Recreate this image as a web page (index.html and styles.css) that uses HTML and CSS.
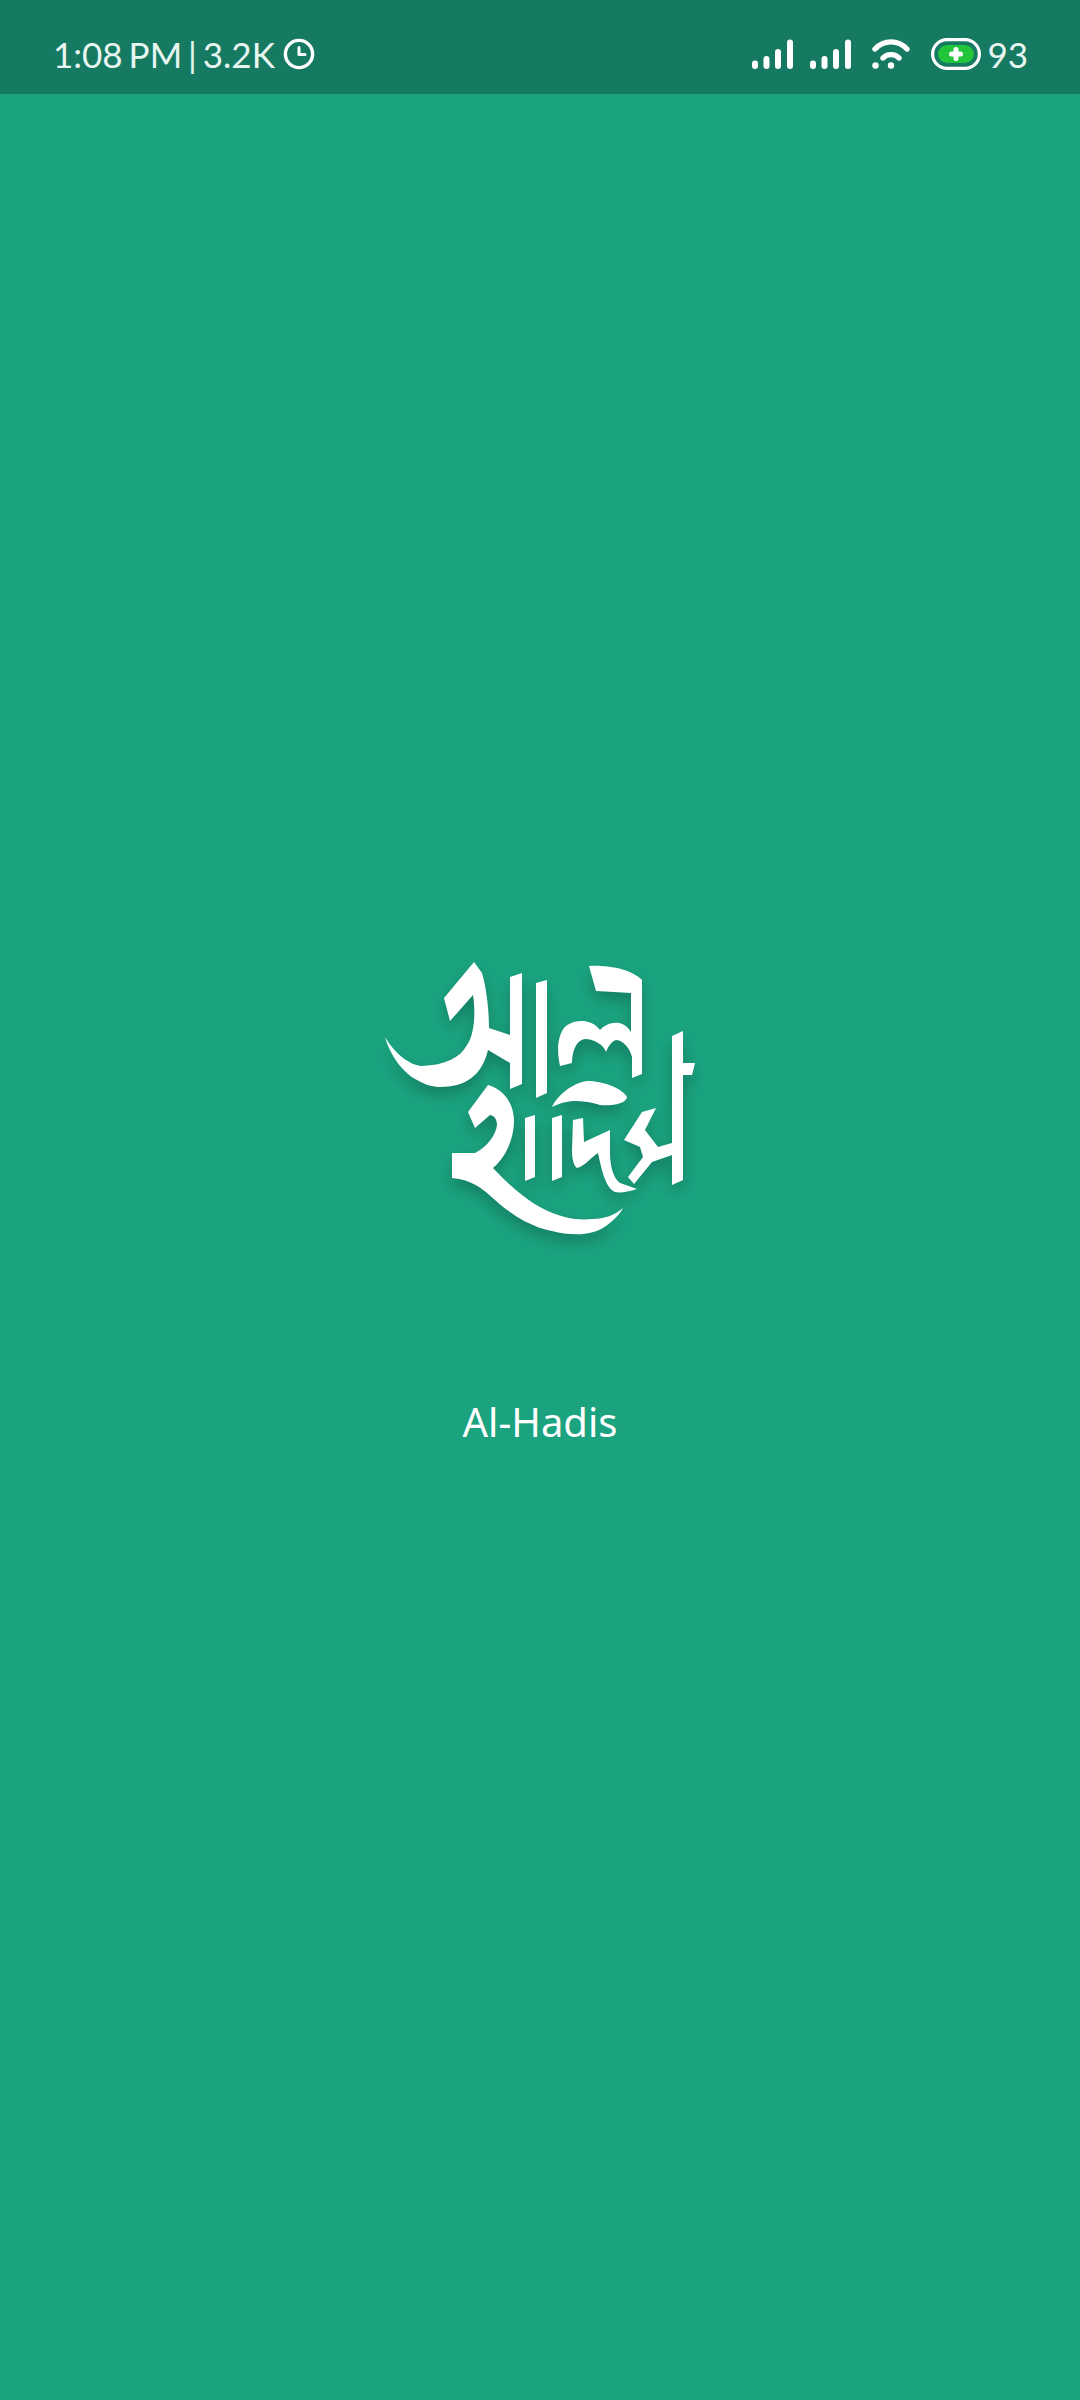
FILE: index.html
```html
<!DOCTYPE html>
<html lang="en">
<head>
<meta charset="utf-8">
<title>Al-Hadis</title>
<link rel="stylesheet" href="styles.css">
</head>
<body>
<div class="screen">
  <header class="status-bar">
    <div class="status-left">
      <span class="status-text">1:08 PM | 3.2K</span>
      <svg class="icon-clock" viewBox="0 0 32 32"><circle cx="16" cy="16" r="13.6" fill="none" stroke="#fff" stroke-width="3.4"/><path d="M16 9.5V16.5H22" fill="none" stroke="#fff" stroke-width="3" stroke-linecap="round" stroke-linejoin="round"/></svg>
    </div>
    <div class="status-right">
      <svg class="icon-signal" viewBox="0 0 41 30"><g fill="none" stroke="#fff" stroke-width="6" stroke-linecap="round"><path d="M3 24.5V27"/><path d="M14.5 20V27"/><path d="M26 13V27"/><path d="M38 3.5V27"/></g></svg>
      <svg class="icon-signal" viewBox="0 0 41 30"><g fill="none" stroke="#fff" stroke-width="6" stroke-linecap="round"><path d="M3 24.5V27"/><path d="M14.5 20V27"/><path d="M26 13V27"/><path d="M38 3.5V27"/></g></svg>
      <svg class="icon-wifi" viewBox="0 0 38 30"><g fill="none" stroke="#fff" stroke-width="5.4" stroke-linecap="round"><path d="M3 10C12 .5 26 .5 35 10"/><path d="M11 19C15 14.5 23 14.5 27 19"/></g><circle cx="3.5" cy="26.5" r="3.2" fill="#fff"/><circle cx="19" cy="26.5" r="3.2" fill="#fff"/></svg>
      <svg class="icon-battery" viewBox="0 0 50 32"><rect x="1.6" y="1.6" width="46.8" height="28.8" rx="14.4" fill="none" stroke="#fff" stroke-width="3.2"/><rect x="7" y="7" width="36" height="18" rx="9" fill="#22c43c"/><path d="M25 11.5V20.5M20.5 16H29.5" stroke="#fff" stroke-width="5" stroke-linecap="round"/></svg>
      <span class="status-text status-level">93</span>
    </div>
  </header>
  <main class="splash">
    <svg class="logo" viewBox="360 940 360 320" role="img" aria-label="আল হাদিস">
      <g fill="#fff">
        <path d="M474 962L444 998L450 1021L473 995C476 1015 474 1035 467 1045C460 1058 445 1065 422 1066C408 1065 394 1052 385 1037C390 1055 403 1073 417 1080C426 1085 433 1087 440 1087C465 1087 482 1076 488 1050L510 1063V1089L522 1084V973L510 977V1035L489 1028C489 1012 487 990 482 973Z"/>
        <path d="M536 983L547 980V1093L536 1098Z"/>
        <path d="M589 966C605 965 630 968 642 980V1074L632 1078V1057C630 1049 624 1041 617 1040C612 1040 608 1047 606 1052C604 1045 594 1039 585 1039C577 1040 572 1050 572 1063L560 1066C557 1052 557 1038 564 1028C571 1020 590 1017 600 1030C607 1022 623 1018 631 1032V993L596 991Z"/>
        <path d="M552 1107C557 1096 572 1083 587 1081C603 1081 622 1088 627 1097C626 1104 612 1106 600 1105C588 1102 572 1097 552 1107Z"/>
        <path d="M672 1036L683 1031V1063L695 1063L692 1075H683V1180L672 1185V1155L652 1162L634 1184L628 1177L643 1157L640 1147L624 1140L642 1112L656 1108L645 1130L658 1147L672 1143Z"/>
        <path d="M573 1120L583 1118L584 1142L610 1130V1153C610 1165 613 1178 620 1183L637 1189C628 1192 620 1193 615 1192C606 1188 602 1172 598 1153C590 1158 585 1166 577 1168C574 1166 572 1160 572 1150Z"/>
        <path d="M525 1118L535 1115V1177L525 1181Z"/>
        <path d="M552 1118L562 1115V1177L552 1181Z"/>
        <path d="M488 1085L468 1112L475 1128L490 1115C495 1116 497 1120 497 1125C496 1135 487 1147 475 1153H452V1178C472 1180 482 1188 495 1200C515 1218 535 1228 552 1231C572 1236 592 1236 606 1226C614 1220 620 1214 623 1208C615 1215 604 1219 593 1219C575 1221 558 1217 540 1207C525 1199 508 1184 493 1168C505 1158 514 1140 514 1120C514 1105 505 1090 488 1085Z"/>
      </g>
    </svg>
    <p class="app-name">Al-Hadis</p>
  </main>
</div>
</body>
</html>
```

FILE: styles.css
```css
html, body {
  margin: 0;
  padding: 0;
}

.screen {
  width: 1080px;
  height: 2400px;
  background: #1ba380;
  display: flex;
  flex-direction: column;
  overflow: hidden;
}

.status-bar {
  height: 94px;
  flex: none;
  background: #167a63;
  display: flex;
  justify-content: space-between;
  align-items: center;
  padding: 14px 52px 0 53px;
  box-sizing: border-box;
}

.status-left,
.status-right {
  display: flex;
  align-items: center;
}

.status-text {
  font-family: "Lato", sans-serif;
  font-size: 35px;
  line-height: 40px;
  word-spacing: -3px;
  color: #e8f6f1;
}

.icon-clock {
  width: 32px;
  height: 32px;
  margin-left: 8px;
}

.icon-signal {
  width: 41px;
  height: 30px;
  margin-right: 17px;
}

.icon-wifi {
  width: 38px;
  height: 30px;
  margin-left: 4px;
  margin-right: 21px;
}

.icon-battery {
  width: 50px;
  height: 32px;
  margin-right: 6px;
}

.splash {
  flex: 1;
  display: flex;
  flex-direction: column;
  align-items: center;
  padding-top: 846px;
}

.logo {
  width: 360px;
  height: 320px;
  filter: blur(0.5px) drop-shadow(0 8px 8px rgba(0, 0, 0, 0.22));
}

.app-name {
  margin: 132px 0 0;
  font-family: "Noto Sans", sans-serif;
  font-size: 40px;
  line-height: 60px;
  color: #fff;
}
```
